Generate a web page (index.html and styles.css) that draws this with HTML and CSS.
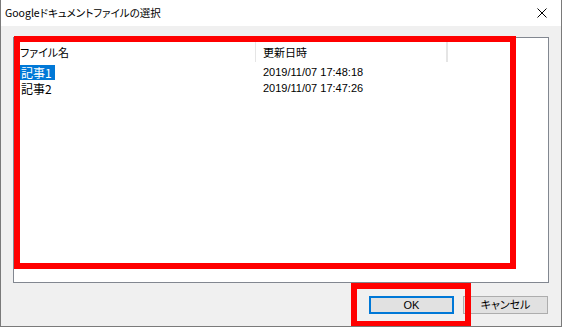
FILE: index.html
```html
<!DOCTYPE html>
<html lang="ja">
<head>
  <meta charset="UTF-8">
  <title>Googleドキュメントファイルの選択</title>
  <link rel="stylesheet" href="styles.css">
</head>
<body>

<div class="window">
  <!-- Title bar -->
  <div class="titlebar">
    <span class="title">Googleドキュメントファイルの選択</span>
    <button class="close" aria-label="閉じる">
      <svg width="10" height="10" viewBox="0 0 10 10">
        <path d="M0.5 0.5 L9.5 9.5 M9.5 0.5 L0.5 9.5" stroke="#000" stroke-width="1" fill="none"/>
      </svg>
    </button>
  </div>

  <div class="client">
    <!-- File list -->
    <div class="listbox">
      <div class="list-header">
        <div class="col col-name">ファイル名</div>
        <div class="col col-date">更新日時</div>
        <div class="col col-rest"></div>
      </div>
      <div class="list-row">
        <div class="col col-name"><span class="label selected">記事1</span></div>
        <div class="col col-date date">2019/11/07 17:48:18</div>
      </div>
      <div class="list-row">
        <div class="col col-name"><span class="label">記事2</span></div>
        <div class="col col-date date">2019/11/07 17:47:26</div>
      </div>
    </div>

    <!-- Buttons -->
    <div class="buttons">
      <button class="btn btn-default">OK</button>
      <button class="btn">キャンセル</button>
    </div>
  </div>

  <!-- annotation marks -->
  <div class="mark mark-list"></div>
  <div class="mark mark-ok"></div>
</div>

</body>
</html>
```

FILE: styles.css
```css
body {
  margin: 0;
  font-family: "Noto Sans CJK JP", "Noto Sans", sans-serif;
  font-feature-settings: "palt";
  font-size: 12px;
  color: #000;
  background-color: #fff;
}

.window {
  position: relative;
  width: 562px;
  height: 327px;
  box-sizing: border-box;
  border: 1px solid #7a7a7a;
  border-top: none;
  background-color: #f0f0f0;
  display: flex;
  flex-direction: column;
  overflow: hidden;
}

.titlebar {
  height: 26px;
  flex-shrink: 0;
  display: flex;
  align-items: center;
  justify-content: space-between;
  background-color: #fff;
  padding-left: 4px;
}

.title {
  font-size: 10.5px;
  line-height: 26px;
}

.close {
  width: 30px;
  height: 26px;
  margin-right: 4px;
  border: none;
  background: none;
  padding: 0;
  display: flex;
  align-items: center;
  justify-content: center;
}

.client {
  flex: 1;
  display: flex;
  flex-direction: column;
  padding: 11px 12px 0 12px;
}

.listbox {
  width: 536px;
  height: 246px;
  box-sizing: border-box;
  border: 1px solid #828790;
  background-color: #fff;
}

.list-header {
  display: flex;
  height: 24px;
  align-items: center;
}

.list-header .col {
  height: 20px;
  margin-top: 4px;
  line-height: 20px;
  font-size: 11px;
  box-sizing: border-box;
  border-right: 1px solid #e5e5e5;
}

.col {
  padding-left: 6px;
  box-sizing: border-box;
  white-space: nowrap;
}

.col-name {
  width: 242px;
}

.col-date {
  width: 191px;
}

.list-header .col-date {
  padding-left: 7px;
}

.col-rest {
  padding: 0;
}

.list-row {
  display: flex;
  height: 16px;
  align-items: center;
}

.list-header + .list-row {
  margin-top: 2px;
}

.list-row .col-name {
  padding-left: 5px;
}

.label {
  display: inline-block;
  line-height: 15px;
  padding: 0 3px 0 2px;
}

.selected {
  background-color: #0078d7;
  color: #fff;
}

.date {
  font-family: "Liberation Sans", Arial, sans-serif;
  font-size: 11px;
  padding-left: 7px;
}

.buttons {
  display: flex;
  justify-content: flex-end;
  gap: 9px;
  margin-top: 13px;
  padding-right: 1px;
}

.btn {
  width: 85px;
  height: 18px;
  box-sizing: border-box;
  border: 1px solid #adadad;
  background-color: #e1e1e1;
  font-family: "Liberation Sans", "Noto Sans CJK JP", sans-serif;
  font-feature-settings: "palt";
  font-size: 11px;
  font-weight: 400;
  color: #000;
  padding: 0;
  line-height: 14px;
}

.btn-default {
  border: 2px solid #0078d7;
}

.mark {
  position: absolute;
  border: 6px solid #ff0000;
  box-sizing: border-box;
}

.mark-list {
  left: 13px;
  top: 36px;
  width: 502px;
  height: 233px;
}

.mark-ok {
  left: 350px;
  top: 283px;
  width: 120px;
  height: 44px;
}
```
